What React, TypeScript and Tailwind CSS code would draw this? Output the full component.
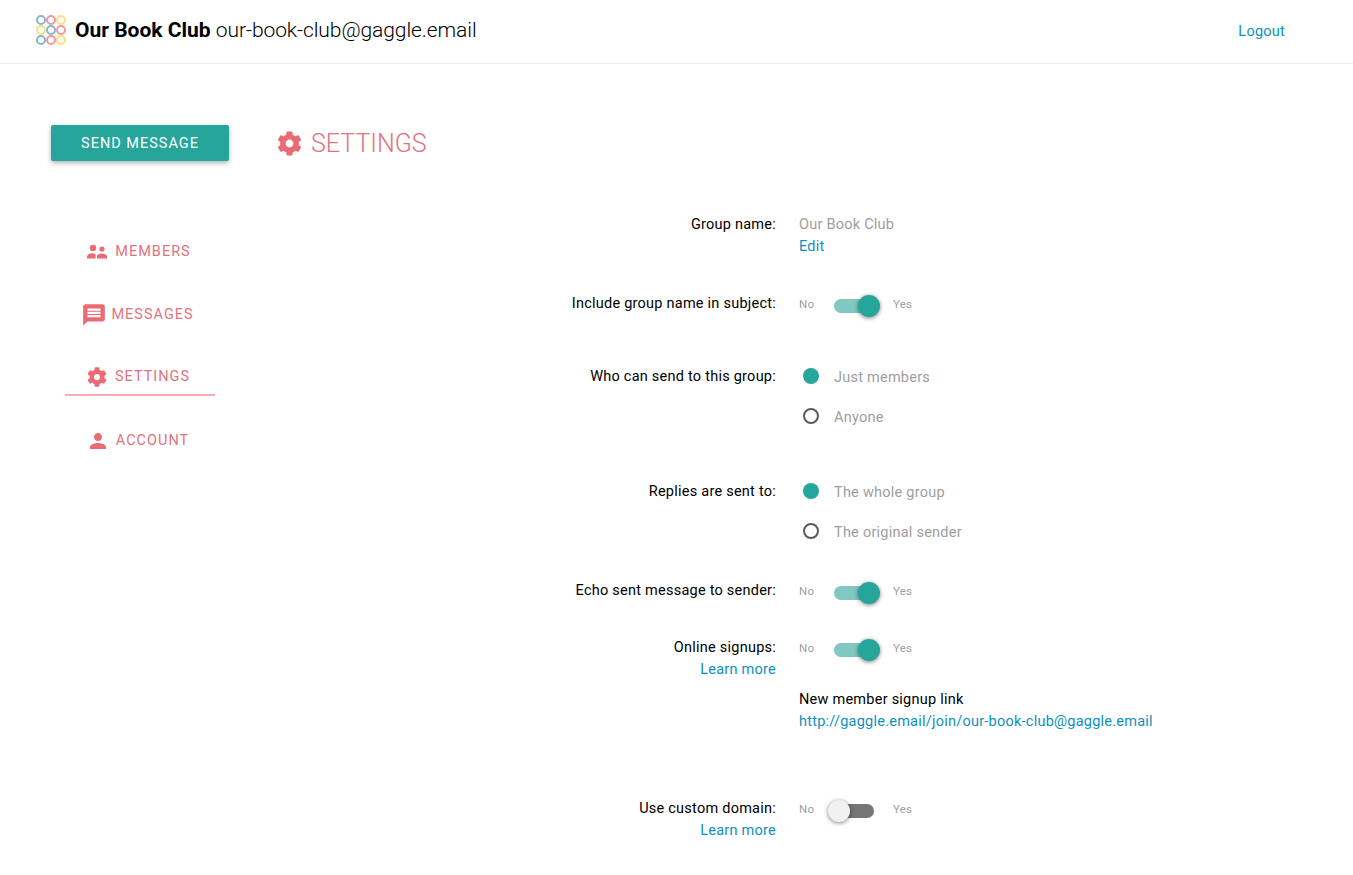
import { FaCog } from 'react-icons/fa';
import { MdMessage, MdPerson } from 'react-icons/md';

function MembersIcon({ size, className }: { size: number; className?: string }) {
  return (
    <svg width={size} height={size} viewBox="0 0 24 24" fill="currentColor" className={className}>
      <circle cx="8" cy="8" r="3.2" />
      <circle cx="17" cy="9" r="2.6" />
      <path d="M2 18.5v-1.8c0-2 3-3.4 5-3.4 1.2 0 2.6.4 3.6 1.2v4H2z" />
      <path d="M12 18.5v-3c1-1.1 3-1.900 5-1.900 2.500 0 5 1.100 5 3v1.900H12z" />
    </svg>
  );
}

function CogIcon({ size, className }: { size: number; className?: string }) {
  return <FaCog size={size} className={className} />;
}

const navItems = [
  { icon: MembersIcon, label: 'MEMBERS', active: false, size: 24, space: 'gap-[6px] pr-[4px]' },
  { icon: MdMessage, label: 'MESSAGES', active: false, size: 26, space: 'gap-[4px] pr-[5px]' },
  { icon: CogIcon, label: 'SETTINGS', active: true, size: 20, space: 'gap-[8px] pr-[3px]' },
  { icon: MdPerson, label: 'ACCOUNT', active: false, size: 24, space: 'gap-[6px] pr-[5px]' },
];

function Logo() {
  const colors = [
    ['#85b8cf', '#f4979f', '#fbdf82'],
    ['#fbdf82', '#85b8cf', '#f4979f'],
    ['#85b8cf', '#f4979f', '#fbdf82'],
  ];
  return (
    <svg width="30" height="30" viewBox="0 0 30 30" fill="none" strokeWidth="2" className="mb-[3px]">
      {colors.map((row, y) =>
        row.map((c, x) => <circle key={`${x}-${y}`} cx={5 + x * 10} cy={5 + y * 10} r="4" stroke={c} />)
      )}
    </svg>
  );
}

function Toggle({ on }: { on: boolean }) {
  return (
    <div className="flex items-center h-[22px] text-[11.5px] text-[#9e9e9e]">
      <span className="w-[35px]">No</span>
      <div className="relative w-[40px] h-[14px] rounded-full translate-y-[2px]" style={{ backgroundColor: on ? '#80c8c0' : '#757575' }}>
        <div
          className={
            on
              ? 'absolute right-[-6px] -top-[4px] w-[22px] h-[22px] rounded-full bg-[#26a69a] shadow-[0_1px_4px_rgba(0,0,0,0.5)]'
              : 'absolute left-[-6px] -top-[4px] w-[22px] h-[22px] rounded-full bg-[#f1f1f1] shadow-[0_1px_4px_rgba(0,0,0,0.5)]'
          }
        />
      </div>
      <span className="ml-[19px]">Yes</span>
    </div>
  );
}

function Radio({ on, label }: { on: boolean; label: string }) {
  return (
    <div className="flex items-center h-[40px] pl-1 text-[#9e9e9e]">
      {on ? (
        <span className="w-4 h-4 mb-[5px] rounded-full bg-[#26a69a]" />
      ) : (
        <span className="w-4 h-4 mb-[5px] rounded-full border-2 border-[#5a5a5a]" />
      )}
      <span className="ml-[15px]">{label}</span>
    </div>
  );
}

function Row({ label, learn, className, children }: { label: string; learn?: boolean; className: string; children: React.ReactNode }) {
  return (
    <div className={`flex ${className}`}>
      <div className="w-[499px] text-right text-black">
        <div>{label}</div>
        {learn && <div className="text-[#0e90c0]">Learn more</div>}
      </div>
      <div className="ml-[23px]">{children}</div>
    </div>
  );
}

export default function App() {
  return (
    <div className="min-h-[875px] bg-white tracking-[0.24px] text-[14.5px] leading-[22px]" style={{ fontFamily: 'Roboto, sans-serif' }}>
      {/* Header */}
      <header className="flex items-center h-[64px] pl-9 pr-[68px] border-b border-[#ececec]">
        <Logo />
        <div className="ml-[9px] mb-[3px] text-[21px] tracking-normal text-black">
          <span className="font-bold">Our Book Club</span> <span className="font-light tracking-[-0.08px]">our-book-club@gaggle.email</span>
        </div>
        <a className="ml-auto text-[#0e90c0]">Logout</a>
      </header>

      <div className="flex pt-[61px]">
        {/* Sidebar */}
        <aside className="w-[277px] pl-[51px]">
          <button className="w-[178px] h-[36px] pt-[2px] rounded-[2px] bg-[#26a69a] text-white tracking-[1px] shadow-[0_2px_5px_rgba(0,0,0,0.3)]">
            SEND MESSAGE
          </button>
          <nav className="mt-[71px] w-[178px] flex flex-col items-center gap-[23px]">
            {navItems.map((item) => (
              <div
                key={item.label}
                className={
                  item.active
                    ? `flex items-center justify-center ${item.space} w-[150px] h-[38px] mb-[2px] pt-[2px] border-b-2 border-[#f5aeb4] text-[#e2737d] tracking-[1px]`
                    : `flex items-center justify-center ${item.space} w-[150px] h-[40px] text-[#e2737d] tracking-[1px]`
                }
              >
                <item.icon className="text-[#ea6b74]" size={item.size} />
                <span>{item.label}</span>
              </div>
            ))}
          </nav>
        </aside>

        <main className="flex-1">
          <div className="flex items-center h-[36px]">
            <CogIcon className="text-[#ea6b74]" size={25} />
            <h1 className="ml-[9px] pt-[2px] text-[25px] font-light tracking-normal text-[#e2737d]">SETTINGS</h1>
          </div>

          <div className="mt-[53px]">
            <Row label="Group name:" className="h-[79px]">
              <div className="text-[#9e9e9e]">Our Book Club</div>
              <div className="text-[#0e90c0]">Edit</div>
            </Row>
            <Row label="Include group name in subject:" className="h-[73px]">
              <Toggle on />
            </Row>
            <Row label="Who can send to this group:" className="h-[115px]">
              <div className="-mt-[8px]">
                <Radio on label="Just members" />
                <Radio on={false} label="Anyone" />
              </div>
            </Row>
            <Row label="Replies are sent to:" className="h-[99px]">
              <div className="-mt-[8px]">
                <Radio on label="The whole group" />
                <Radio on={false} label="The original sender" />
              </div>
            </Row>
            <Row label="Echo sent message to sender:" className="h-[57px]">
              <Toggle on />
            </Row>
            <Row label="Online signups:" learn className="h-[161px]">
              <Toggle on />
              <div className="mt-[30px] text-black">New member signup link</div>
              <div className="text-[#0e90c0]">http://gaggle.email/join/our-book-club@gaggle.email</div>
            </Row>
            <Row label="Use custom domain:" learn className="h-[50px]">
              <Toggle on={false} />
            </Row>
          </div>
        </main>
      </div>
    </div>
  );
}
